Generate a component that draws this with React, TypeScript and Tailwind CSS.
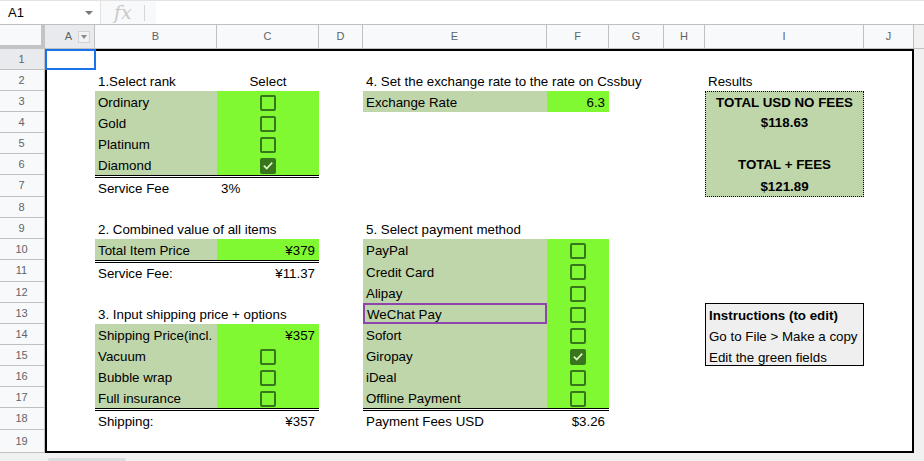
import clsx from "clsx";
import type { ReactNode } from "react";

// column / row placement for the sheet grid (A..J, 1..19)
const COL: Record<string, string> = {
  A: "col-start-1",
  B: "col-start-2",
  C: "col-start-3",
  D: "col-start-4",
  E: "col-start-5",
  F: "col-start-6",
  G: "col-start-7",
  H: "col-start-8",
  I: "col-start-9",
  J: "col-start-10",
};
const ROW = [
  "",
  "row-start-1",
  "row-start-2",
  "row-start-3",
  "row-start-4",
  "row-start-5",
  "row-start-6",
  "row-start-7",
  "row-start-8",
  "row-start-9",
  "row-start-10",
  "row-start-11",
  "row-start-12",
  "row-start-13",
  "row-start-14",
  "row-start-15",
  "row-start-16",
  "row-start-17",
  "row-start-18",
  "row-start-19",
];

const HEADERS = [
  { label: "A", cls: "w-[50px]" },
  { label: "B", cls: "w-[122px]" },
  { label: "C", cls: "w-[102px]" },
  { label: "D", cls: "w-[44px]" },
  { label: "E", cls: "w-[184px]" },
  { label: "F", cls: "w-[62px]" },
  { label: "G", cls: "w-[55px]" },
  { label: "H", cls: "w-[41px]" },
  { label: "I", cls: "w-[159px]" },
  { label: "J", cls: "w-[50px]" },
];

const SAGE = "bg-[#bfd6aa]";
const LIME = "bg-[#80f932]";
const DOUBLE = "border-t-[3px] border-double border-black";

const RANKS: [string, boolean][] = [
  ["Ordinary", false],
  ["Gold", false],
  ["Platinum", false],
  ["Diamond", true],
];

const PAYMENTS: [string, boolean][] = [
  ["PayPal", false],
  ["Credit Card", false],
  ["Alipay", false],
  ["WeChat Pay", false],
  ["Sofort", false],
  ["Giropay", true],
  ["iDeal", false],
  ["Offline Payment", false],
];

const SHIPPING_OPTS = ["Vacuum", "Bubble wrap", "Full insurance"];

function Cell({
  col,
  row,
  className,
  children,
}: {
  col: string;
  row: number;
  className?: string;
  children?: ReactNode;
}) {
  return (
    <div
      className={clsx(
        COL[col],
        ROW[row],
        "flex items-center px-[3px] pt-[3px] text-[13.33px] leading-none text-black whitespace-nowrap",
        className
      )}
    >
      {children}
    </div>
  );
}

function Checkbox({ checked }: { checked: boolean }) {
  return (
    <span
      className={clsx(
        "-mt-[1px] flex h-[16px] w-[16px] items-center justify-center rounded-[2px] border-2 border-[#38761d]",
        checked && "bg-[#38761d]"
      )}
    >
      {checked && (
        <svg width="13" height="13" viewBox="0 0 12 12">
          <path d="M1.8 6.2 L4.7 9 L10.2 3.2" fill="none" stroke="#d6f3c2" strokeWidth="1.8" />
        </svg>
      )}
    </span>
  );
}

export default function App() {
  return (
    <div className="h-[461px] w-[924px] overflow-hidden bg-white font-['Liberation_Sans',Arial,sans-serif]">
      {/* formula bar */}
      <div className="flex h-[25px] border-t border-b border-t-[#e3e3e3] border-b-[#c0c0c0]">
        <div className="flex w-[100px] items-center justify-between pl-[8px] pr-[7px] text-[13px] text-black">
          <span>A1</span>
          <span className="h-0 w-0 border-x-[4px] border-t-[4px] border-x-transparent border-t-[#777]" />
        </div>
        <div className="flex w-[56px] items-center bg-[#f8f9fa] border-l border-[#e3e3e3]">
          <span className="ml-[13px] font-['DejaVu_Serif',serif] text-[19px] italic leading-none text-[#c8c8c8]">
            fx
          </span>
          <span className="ml-[12px] h-[16px] border-l border-[#d5d5d5]" />
        </div>
      </div>

      {/* column headers */}
      <div className="flex h-[24px]">
        <div className="w-[45px] border-r-[4px] border-b-[4px] border-[#c4c4c4] bg-[#f8f9fa]" />
        {HEADERS.map((h) =>
          h.label === "A" ? (
            <div
              key={h.label}
              className={clsx(
                h.cls,
                "flex items-center justify-end gap-[6px] border-r border-b border-[#c0c0c0] bg-[#e8eaed] pr-[4px] text-[11px] text-[#5f6368]"
              )}
            >
              <span>A</span>
              <span className="flex h-[12px] w-[12px] items-center justify-center border border-[#d3d3d3] bg-[#f1f3f4]">
                <span className="h-0 w-0 border-x-[3px] border-t-[4px] border-x-transparent border-t-[#8a8a8a]" />
              </span>
            </div>
          ) : (
            <div
              key={h.label}
              className={clsx(
                h.cls,
                "flex items-center justify-center border-r border-b border-[#c0c0c0] bg-[#f8f9fa] text-[11px] text-[#5f6368]"
              )}
            >
              {h.label}
            </div>
          )
        )}
        <div className="w-[10px] border-b border-[#c0c0c0] bg-[#f1f1f1]" />
      </div>

      {/* sheet body */}
      <div className="flex">
        <div className="grid w-[45px] grid-rows-[21px_21px_21px_21px_21px_21px_22px_21px_21px_21px_22px_21px_21px_21px_21px_21px_21px_22px_23px]">
          {Array.from({ length: 19 }, (_, i) => (
            <div
              key={i}
              className={clsx(
                "flex items-center justify-center border-r border-b border-[#c0c0c0] pr-[1px] text-[11px] text-[#5f6368]",
                i === 0 ? "bg-[#e8eaed]" : "bg-[#f8f9fa]"
              )}
            >
              {i + 1}
            </div>
          ))}
        </div>

        <div className="relative grid grid-cols-[50px_122px_102px_44px_184px_62px_55px_41px_159px_50px] grid-rows-[21px_21px_21px_21px_21px_21px_22px_21px_21px_21px_22px_21px_21px_21px_21px_21px_21px_22px_23px]">
          {/* 1. rank */}
          <Cell col="B" row={2}>1.Select rank</Cell>
          <Cell col="C" row={2} className="justify-center">Select</Cell>
          {RANKS.map(([name, checked], i) => (
            <>
              <Cell key={name} col="B" row={3 + i} className={SAGE}>
                {name}
              </Cell>
              <Cell key={name + "-c"} col="C" row={3 + i} className={clsx(LIME, "justify-center")}>
                <Checkbox checked={checked} />
              </Cell>
            </>
          ))}
          <Cell col="B" row={7} className={DOUBLE}>Service Fee</Cell>
          <Cell col="C" row={7} className={clsx(DOUBLE, "pl-[4px]")}>3%</Cell>

          {/* 2. item value */}
          <Cell col="B" row={9}>2. Combined value of all items</Cell>
          <Cell col="B" row={10} className={SAGE}>Total Item Price</Cell>
          <Cell col="C" row={10} className={clsx(LIME, "justify-end pr-[4px]")}>¥379</Cell>
          <Cell col="B" row={11} className={DOUBLE}>Service Fee:</Cell>
          <Cell col="C" row={11} className={clsx(DOUBLE, "justify-end pr-[4px]")}>¥11.37</Cell>

          {/* 3. shipping */}
          <Cell col="B" row={13}>3. Input shipping price + options</Cell>
          <Cell col="B" row={14} className={clsx(SAGE, "overflow-hidden")}>Shipping Price(incl.</Cell>
          <Cell col="C" row={14} className={clsx(LIME, "justify-end pr-[4px]")}>¥357</Cell>
          {SHIPPING_OPTS.map((name, i) => (
            <>
              <Cell key={name} col="B" row={15 + i} className={SAGE}>
                {name}
              </Cell>
              <Cell key={name + "-c"} col="C" row={15 + i} className={clsx(LIME, "justify-center")}>
                <Checkbox checked={false} />
              </Cell>
            </>
          ))}
          <Cell col="B" row={18} className={DOUBLE}>Shipping:</Cell>
          <Cell col="C" row={18} className={clsx(DOUBLE, "justify-end pr-[4px]")}>¥357</Cell>

          {/* 4. exchange rate */}
          <Cell col="E" row={2}>4. Set the exchange rate to the rate on Cssbuy</Cell>
          <Cell col="E" row={3} className={SAGE}>Exchange Rate</Cell>
          <Cell col="F" row={3} className={clsx(LIME, "justify-end pr-[4px]")}>6.3</Cell>

          {/* 5. payment */}
          <Cell col="E" row={9}>5. Select payment method</Cell>
          {PAYMENTS.map(([name, checked], i) => (
            <>
              <Cell
                key={name}
                col="E"
                row={10 + i}
                className={clsx(SAGE, name === "WeChat Pay" && "border-2 border-[#8e44ad] pl-[2px]")}
              >
                {name}
              </Cell>
              <Cell key={name + "-c"} col="F" row={10 + i} className={clsx(LIME, "justify-center")}>
                <Checkbox checked={checked} />
              </Cell>
            </>
          ))}
          <Cell col="E" row={18} className={DOUBLE}>Payment Fees USD</Cell>
          <Cell col="F" row={18} className={clsx(DOUBLE, "justify-end pr-[4px]")}>$3.26</Cell>

          {/* results */}
          <Cell col="I" row={2}>Results</Cell>
          <div className="col-start-9 row-span-5 row-start-3 grid grid-rows-[20px_21px_21px_21px_22px] border border-dotted border-black bg-[#bfd6aa] text-[13.33px] font-bold leading-none text-black">
            <div className="flex items-center justify-center pt-[1px]">TOTAL USD NO FEES</div>
            <div className="flex items-center justify-center pt-[1px]">$118.63</div>
            <div />
            <div className="flex items-center justify-center pt-[1px]">TOTAL + FEES</div>
            <div className="flex items-center justify-center pt-[1px]">$121.89</div>
          </div>

          {/* instructions */}
          <div className="col-start-9 row-span-3 row-start-13 grid grid-rows-[21px_21px_21px] border border-black bg-[#efefef] px-[3px] pt-[1px] text-[13.33px] leading-none text-black">
            <div className="flex items-center font-bold">Instructions (to edit)</div>
            <div className="flex items-center">Go to File &gt; Make a copy</div>
            <div className="flex items-center">Edit the green fields</div>
          </div>

          {/* frame + selection overlays */}
          <div className="pointer-events-none absolute inset-0 border-2 border-black" />
          <div className="pointer-events-none absolute left-0 top-0 h-[21px] w-[51px] border-2 border-[#1a73e8]" />
        </div>

        <div className="w-[10px] bg-[#f1f1f1]" />
      </div>

      {/* bottom scrollbar area */}
      <div className="h-[8px] bg-[#f1f1f1] pt-[5px]">
        <div className="ml-[48px] h-[3px] w-[78px] rounded-t-[2px] bg-[#dadce0]" />
      </div>
    </div>
  );
}
